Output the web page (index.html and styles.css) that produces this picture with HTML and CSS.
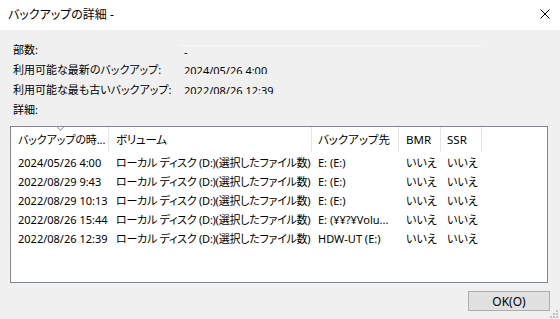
FILE: index.html
```html
<!DOCTYPE html>
<html lang="ja">
<head>
  <meta charset="UTF-8">
  <title>バックアップの詳細</title>
  <link rel="stylesheet" href="styles.css">
</head>
<body>
  <div class="window">
    <div class="titlebar">
      <span class="title">バックアップの詳細 -</span>
      <svg class="close" width="10" height="10" viewBox="0 0 10 10">
        <path d="M0.5 0.5 L9.5 9.5 M9.5 0.5 L0.5 9.5" stroke="#000" stroke-width="1" fill="none"/>
      </svg>
    </div>

    <div class="summary">
      <div class="label">部数:</div>
      <div class="val first">-</div>
      <div class="label">利用可能な最新のバックアップ:</div>
      <div class="val">2024/05/26 4:00</div>
      <div class="label">利用可能な最も古いバックアップ:</div>
      <div class="val">2022/08/26 12:39</div>
      <div class="label">詳細:</div>
    </div>

    <div class="listbox">
      <div class="row head">
        <div class="cell c1">バックアップの時...<span class="sort"></span></div>
        <div class="cell c2">ボリューム</div>
        <div class="cell c3">バックアップ先</div>
        <div class="cell c4">BMR</div>
        <div class="cell c5">SSR</div>
      </div>
      <div class="row">
        <div class="cell c1">2024/05/26 4:00</div>
        <div class="cell c2">ローカル ディスク (D:)(選択したファイル数)</div>
        <div class="cell c3">E: (E:)</div>
        <div class="cell c4">いいえ</div>
        <div class="cell c5">いいえ</div>
      </div>
      <div class="row">
        <div class="cell c1">2022/08/29 9:43</div>
        <div class="cell c2">ローカル ディスク (D:)(選択したファイル数)</div>
        <div class="cell c3">E: (E:)</div>
        <div class="cell c4">いいえ</div>
        <div class="cell c5">いいえ</div>
      </div>
      <div class="row">
        <div class="cell c1">2022/08/29 10:13</div>
        <div class="cell c2">ローカル ディスク (D:)(選択したファイル数)</div>
        <div class="cell c3">E: (E:)</div>
        <div class="cell c4">いいえ</div>
        <div class="cell c5">いいえ</div>
      </div>
      <div class="row">
        <div class="cell c1">2022/08/26 15:44</div>
        <div class="cell c2">ローカル ディスク (D:)(選択したファイル数)</div>
        <div class="cell c3">E: (¥¥?¥Volu...</div>
        <div class="cell c4">いいえ</div>
        <div class="cell c5">いいえ</div>
      </div>
      <div class="row">
        <div class="cell c1">2022/08/26 12:39</div>
        <div class="cell c2">ローカル ディスク (D:)(選択したファイル数)</div>
        <div class="cell c3">HDW-UT (E:)</div>
        <div class="cell c4">いいえ</div>
        <div class="cell c5">いいえ</div>
      </div>
    </div>

    <div class="buttons">
      <button class="ok">OK(O)</button>
    </div>

    <svg class="grip" width="8" height="8" viewBox="0 0 8 8">
      <rect x="6" y="0" width="2" height="2" fill="#c4c4c4"/>
      <rect x="3" y="3" width="2" height="2" fill="#c4c4c4"/>
      <rect x="6" y="3" width="2" height="2" fill="#c4c4c4"/>
      <rect x="0" y="6" width="2" height="2" fill="#c4c4c4"/>
      <rect x="3" y="6" width="2" height="2" fill="#c4c4c4"/>
      <rect x="6" y="6" width="2" height="2" fill="#c4c4c4"/>
    </svg>
  </div>
</body>
</html>
```

FILE: styles.css
```css
body{
  margin: 0;
  font-family: "Noto Sans", "Noto Sans CJK JP", sans-serif;
  font-size: 11px;
  color: #000;
  font-feature-settings: "palt";
}
.window{
  position: relative;
  width: 560px;
  height: 319px;
  background-color: #f0f0f0;
  overflow: hidden;
}
.titlebar{
  height: 30px;
  background-color: #fff;
  display: flex;
  align-items: center;
  justify-content: space-between;
  padding: 0 10px 2px 8px;
  box-sizing: border-box;
  font-size: 12px;
}
.summary{
  display: grid;
  grid-template-columns: 167px 302px;
  grid-auto-rows: 20px;
  padding: 10px 0 0 13px;
}
.label{
  line-height: 20px;
  white-space: nowrap;
}
.val{
  height: 13px;
  overflow: hidden;
  padding-left: 4px;
  line-height: 19px;
  margin-top: 1px;
}
.val.first{
  margin-top: 5px;
  border-top: 1px solid #f8f8f8;
  height: 9px;
  line-height: 11px;
}
.listbox{
  margin: 6px 0 0 10px;
  width: 538px;
  height: 157px;
  box-sizing: border-box;
  border: 1px solid #828790;
  background-color: #fff;
}
.row{
  display: flex;
  height: 19px;
  line-height: 19px;
}
.row.head{
  height: 25px;
  line-height: 25px;
  margin-bottom: 1px;
}
.cell{
  position: relative;
  padding-left: 7px;
  box-sizing: border-box;
  white-space: nowrap;
  overflow: hidden;
}
.head .cell{
  border-right: 1px solid #e5e5e5;
  font-size: 11.5px;
}
.head .c1{
  font-size: 11px;
  letter-spacing: -0.1px;
}
.c1{ width: 98px; }
.c2{ width: 203px; letter-spacing: -0.25px; }
.c3{ width: 87px; padding-left: 6px; }
.c4{ width: 42px; }
.c5{ width: 41px; padding-left: 6px; }
.sort{
  position: absolute;
  left: 47px;
  top: -2px;
  width: 4px;
  height: 4px;
  border-right: 1px solid #a0a0a0;
  border-bottom: 1px solid #a0a0a0;
  transform: rotate(45deg);
}
.buttons{
  display: flex;
  justify-content: flex-end;
  padding: 8px 10px 0 0;
}
.ok{
  width: 82px;
  height: 20px;
  padding: 0;
  border: 1px solid #adadad;
  background-color: #e1e1e1;
  font-family: inherit;
  font-size: 12px;
  color: #000;
}
.grip{
  position: absolute;
  right: 2px;
  bottom: 1px;
}
```
